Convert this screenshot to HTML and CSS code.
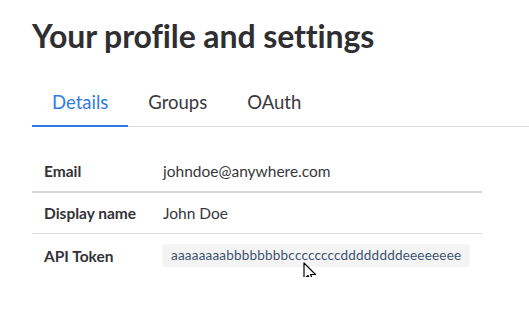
FILE: index.html
```html
<!DOCTYPE html>
<html>
<head>
<meta charset="utf-8">
<link rel="stylesheet" href="styles.css">
</head>
<body>
<div class="page">
  <h1 class="title">Your profile and settings</h1>
  <nav class="tabs">
    <a class="tab active">Details</a>
    <a class="tab">Groups</a>
    <a class="tab">OAuth</a>
  </nav>
  <div class="details">
    <div class="row row-first">
      <div class="label">Email</div>
      <div class="value">johndoe@anywhere.com</div>
    </div>
    <div class="row">
      <div class="label">Display name</div>
      <div class="value">John Doe</div>
    </div>
    <div class="row row-last">
      <div class="label">API Token</div>
      <div class="value"><span class="token">aaaaaaaabbbbbbbbccccccccddddddddeeeeeeee</span></div>
    </div>
  </div>
  <svg class="cursor" width="14" height="22" viewBox="0 0 14 22"><path d="M1 1 L1 17 L5 13.5 L8 20.5 L10.5 19.5 L7.5 12.5 L12.5 12.5 Z" fill="#fff" stroke="#000" stroke-width="1.2" stroke-linejoin="round"/></svg>
</div>
</body>
</html>
```
FILE: styles.css
```css
html, body { margin: 0; padding: 0; background: #fff; }
body { font-family: Lato, "Noto Sans", sans-serif; color: #333338; }
.page { position: relative; padding: 16px 0 0 32px; }
.title { margin: 0; font-size: 32px; font-weight: 700; line-height: 40px; color: #2f2f33; letter-spacing: -0.1px; }
.tabs { display: flex; margin-top: 34px; border-bottom: 1px solid #dcdcdc; }
.tab { padding: 0 20px 11px; font-size: 18.5px; line-height: 24px; color: #38383d; border-bottom: 2px solid transparent; margin-bottom: -1px; }
.tab.active { color: #2f7ae5; border-bottom-color: #2f7ae5; }
.details { width: 450px; margin-top: 24px; }
.row { display: flex; align-items: center; height: 40px; border-bottom: 1px solid #dedede; }
.row-first { border-bottom: 2px solid #d6d6d6; }
.row-last { border-bottom: none; height: 43px; }
.label { width: 119px; padding-left: 12px; font-weight: 700; font-size: 15.5px; color: #333338; }
.value { font-size: 15.5px; color: #38383d; }
.token { display: inline-block; background: #f4f4f4; border-radius: 4px; padding: 3px 9px 4px 9px; font-size: 13.5px; color: #3b5370; margin-left: -1px; letter-spacing: 0.2px; }
.cursor { position: absolute; left: 303px; top: 262px; }
```
